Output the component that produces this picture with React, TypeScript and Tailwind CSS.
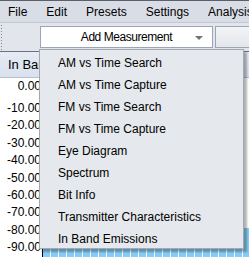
const MENU_BAR = ["File", "Edit", "Presets", "Settings", "Analysis"];

const MEASUREMENTS = [
  "AM vs Time Search",
  "AM vs Time Capture",
  "FM vs Time Search",
  "FM vs Time Capture",
  "Eye Diagram",
  "Spectrum",
  "Bit Info",
  "Transmitter Characteristics",
  "In Band Emissions",
];

const Y_LABELS = ["-10.00", "-20.00", "-30.00", "-40.00", "-50.00", "-60.00", "-70.00", "-80.00", "-90.00"];

export default function App() {
  return (
    <div className="relative w-[249px] h-[257px] overflow-hidden bg-white text-black flex flex-col font-['Liberation_Sans',Arial,sans-serif]">
      {/* menu bar */}
      <div className="h-[22px] shrink-0 border-t border-[#5d6068] bg-[#d9dde6] flex items-center gap-[19px] pl-[8px] text-[12px] whitespace-nowrap">
        {MENU_BAR.map((m) => (
          <span key={m}>{m}</span>
        ))}
      </div>

      {/* toolbar */}
      <div className="h-[29px] shrink-0 bg-[#e2e5eb] border-t border-[#c3c8d1] flex items-center">
        <div className="self-stretch w-[3px] my-[1px] bg-[radial-gradient(#7d828b_0.7px,transparent_0.9px)] bg-[length:3px_3px]" />
        <div className="ml-[37px] w-[173px] h-[22px] bg-white border border-[#9aa5b8] relative flex items-center justify-center text-[12px] tracking-[-0.45px]">
          Add Measurement
          <span className="absolute right-[9px] top-[9px] w-0 h-0 border-l-[4px] border-r-[4px] border-t-[4px] border-l-transparent border-r-transparent border-t-[#6f7379]" />
        </div>
        <div className="ml-[2px] flex-1 h-[22px] border border-r-0 border-[#9aa5b8] bg-gradient-to-b from-[#f3f4f6] to-[#e4e6ea]" />
      </div>

      {/* table header */}
      <div className="h-[27px] shrink-0 border-t border-[#6e727a] border-b border-b-[#b8c0ce] bg-gradient-to-b from-[#e6ebf4] to-[#d9e1ee] flex items-center pl-[8px] text-[13px] whitespace-nowrap">
        In Band Emissions
      </div>

      {/* chart */}
      <div className="flex flex-1 min-h-0">
        <div className="w-[42px] flex flex-col items-end pt-[1px] pr-[1px] text-[12px] leading-[14px]">
          <div className="h-[14px]">0.00</div>
          <div className="flex flex-col mt-[8px] gap-[3.4px]">
            {Y_LABELS.map((l) => (
              <div key={l} className="h-[14px]">
                {l}
              </div>
            ))}
          </div>
        </div>
        <div className="flex-1 border-l border-black flex items-end gap-[1px]">
          <div className="flex-1 h-[8px] bg-[repeating-linear-gradient(90deg,#86ccf6_0px,#86ccf6_7px,#ffffff_7px,#ffffff_8px)]" />
          <div className="w-[6px] h-[29px] bg-[#86ccf6]" />
        </div>
      </div>

      {/* dropdown menu */}
      <div className="absolute left-[39px] top-[49px] w-[205px] border border-[#a3a8b0] bg-[#e5e8ec] shadow-[3px_3px_2px_rgba(0,0,0,0.3)] text-[12px]">
        {MEASUREMENTS.map((m) => (
          <div key={m} className="h-[22px] flex items-center pt-[4px] pl-[18px] whitespace-nowrap">
            {m}
          </div>
        ))}
      </div>
    </div>
  );
}
